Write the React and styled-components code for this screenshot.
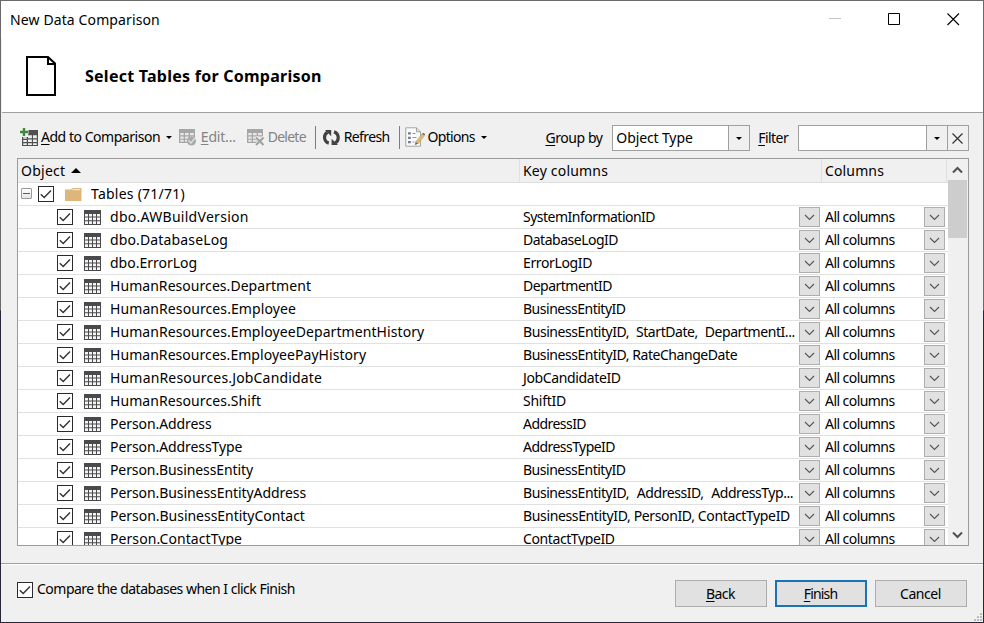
import React from "react";
import styled, { createGlobalStyle } from "styled-components";

const GlobalStyle = createGlobalStyle`
  * { box-sizing: border-box; }
  body { margin: 0; overflow: hidden; background: #fff; }
`;

const Window = styled.div`
  position: relative;
  display: flex;
  flex-direction: column;
  width: 984px;
  height: 623px;
  border: 1px solid;
  border-image: linear-gradient(#6b6a6b 49.7%, #262838 50%) 1;
  background: #f0f0f0;
  color: #000;
  font: 14px/20px "Noto Sans", "Open Sans", sans-serif;
  white-space: nowrap;
`;

const Label = styled.span`
  letter-spacing: ${(p) => p.$ls || 0}px;
  word-spacing: ${(p) => p.$ws || 0}px;
`;

const ObjectName = styled(Label)`
  margin-left: ${(p) => p.$ml ?? 9}px;
`;

const Mnemonic = styled.span`
  text-decoration: underline;
  text-decoration-thickness: 1px;
  text-underline-offset: 2px;
`;

const TitleBar = styled.header`
  display: flex;
  justify-content: space-between;
  height: 37px;
  padding: 9px 23px 0 9px;
  background: #fff;
`;

const WindowControls = styled.div`
  display: flex;
  gap: 46px;
  padding-top: 3px;
`;

const Banner = styled.section`
  display: flex;
  height: 75px;
  padding-left: 24px;
  background: #fff;
  border-bottom: 1px solid #a0a0a0;
  margin: 0 0 0 1px;
`;

const BannerIcon = styled.svg`
  margin-top: 16px;
`;

const Heading = styled.h1`
  margin: 27px 0 0 28px;
  font-size: 16px;
  line-height: 22px;
  font-weight: 700;
  letter-spacing: 0.25px;
`;

const Toolbar = styled.div`
  display: flex;
  align-items: center;
  height: 26px;
  margin: 12px 14px 7px 19px;
`;

const ToolButton = styled.div`
  display: flex;
  align-items: center;
  width: ${(p) => p.$width}px;
  height: 24px;
  margin-bottom: 2px;
  color: ${(p) => (p.$disabled ? "#838383" : "#000")};
  svg { flex: none; margin-right: ${(p) => p.$gap ?? 3}px; }
`;

const Caret = styled.i`
  width: 0;
  height: 0;
  margin-left: ${(p) => p.$ml || 0}px;
  border: 3px solid transparent;
  border-top-color: #000;
  border-bottom: 0;
`;

const Divider = styled.i`
  width: 1px;
  height: 23px;
  margin-bottom: 1px;
  background: #7d7d7d;
  margin-right: ${(p) => p.$mr}px;
`;

const FieldLabel = styled.label`
  width: ${(p) => p.$width}px;
  padding-bottom: 1px;
`;

const Combo = styled.div`
  display: flex;
  width: ${(p) => p.$width}px;
  height: 26px;
  margin-right: ${(p) => p.$mr || 0}px;
  border: 1px solid #a0a0a0;
`;

const ComboValue = styled.div`
  flex: 1;
  padding: 2px 0 0 3px;
  background: #fff;
`;

const ComboButton = styled.div`
  display: flex;
  align-items: center;
  justify-content: center;
  width: ${(p) => p.$width}px;
  border-left: 1px solid #a0a0a0;
`;

const Table = styled.div`
  display: flex;
  width: 952px;
  height: 388px;
  margin-left: 16px;
  border: 1px solid #9b9b9b;
  background: #fff;
  overflow: hidden;
`;

const Grid = styled.div`
  width: 930px;
`;

const HeaderRow = styled.div`
  display: grid;
  grid-template-columns: 502px 302px 125px;
  height: 24px;
  padding-right: 1px;
  background: #f0f0f0;
  border-bottom: 1px solid #dedede;
`;

const HeaderCell = styled.div`
  display: flex;
  align-items: center;
  padding: 1px 0 0 3px;
  border-right: 1px solid #e0e0e0;
`;

const SortArrow = styled.i`
  width: 0;
  height: 0;
  margin: 0 0 1px 6px;
  border: 5px solid transparent;
  border-bottom-color: #000;
  border-top: 0;
`;

const Row = styled.div`
  display: grid;
  grid-template-columns: 502px 302px 126px;
  height: 23px;
  border-bottom: 1px solid #e1e1e1;
`;

const ObjectCell = styled.div`
  display: flex;
  align-items: center;
  padding-left: ${(p) => p.$indent}px;
`;

const DropCell = styled.div`
  display: flex;
  justify-content: space-between;
  padding: 1px ${(p) => p.$right}px 0 3px;
`;

const DropButton = styled.div`
  display: flex;
  align-items: center;
  justify-content: center;
  width: 21px;
  height: 20px;
  border: 1px solid #adadad;
  background: #e1e1e1;
`;

const CheckFrame = styled.span`
  display: flex;
  flex: none;
  width: 16px;
  height: 16px;
  border: 1px solid #2b2b2b;
  background: #fff;
  margin-right: ${(p) => p.$mr}px;
`;

const Expander = styled.span`
  display: flex;
  align-items: center;
  justify-content: center;
  width: 11px;
  height: 11px;
  margin: 0 6px 1px 0;
  border: 1px solid #9a9a9a;
  border-radius: 1px;
  background: linear-gradient(#fff, #e4e4e4);
  &::after { content: ""; width: 7px; height: 1px; background: #4a5d92; }
`;

const ScrollBar = styled.div`
  display: flex;
  flex-direction: column;
  align-items: center;
  width: 20px;
  padding-right: 1px;
  background: #f0f0f0;
`;

const ScrollButton = styled.div`
  display: flex;
  align-items: center;
  justify-content: center;
  height: 21px;
`;

const ScrollThumb = styled.div`
  width: 19px;
  height: 58px;
  margin-bottom: auto;
  background: #cdcdcd;
`;

const Footer = styled.footer`
  display: flex;
  height: 59px;
  margin-top: 17px;
  padding: 15px 16px 0;
  border-top: 1px solid #a0a0a0;
  box-shadow: inset 0 1px #fff;
`;

const FooterOption = styled.label`
  display: flex;
  flex: 1;
  height: 20px;
  ${CheckFrame} { margin-top: 3px; }
`;

const Buttons = styled.div`
  display: flex;
  gap: 8px;
  padding-top: 1px;
`;

const Button = styled.button`
  width: 92px;
  height: 27px;
  padding: 1px 1px 0 0;
  border: ${(p) => (p.$primary ? "2px solid #1a73b5" : "1px solid #adadad")};
  background: #e1e1e1;
  color: #000;
  font: inherit;
`;

const Grip = styled.svg`
  position: absolute;
  right: 0;
  bottom: 0;
`;

function Check({ mr = 0 }) {
  return (
    <CheckFrame $mr={mr}>
      <svg width="14" height="14" fill="none" stroke="#333" strokeWidth="1.4">
        <path d="M1.8 7.2 5.2 10.4 12 3.6" />
      </svg>
    </CheckFrame>
  );
}

function TableIcon() {
  return (
    <svg width="17" height="15">
      <path fill="#4a4a4c" d="M0 0h17v15H0z" />
      <path
        fill="#f4f4f4"
        d="M1 4h3v2.6H1zM5 4h3v2.6H5zM9 4h3v2.6H9zM13 4h3v2.6h-3zM1 7.6h3v2.6H1zM5 7.6h3v2.6H5zM9 7.6h3v2.6H9zM13 7.6h3v2.6h-3zM1 11.2h3v2.7H1zM5 11.2h3v2.7H5zM9 11.2h3v2.7H9zM13 11.2h3v2.7h-3z"
      />
    </svg>
  );
}

function FolderIcon() {
  return (
    <svg width="17" height="15">
      <path fill="#dcb67a" d="M0 2.5h6l2-1.5h8.5v13H0z" />
      <path fill="#f3e4cb" d="M8.2 2h7v1.2H7z" />
    </svg>
  );
}

function AddTableIcon() {
  return (
    <svg width="18" height="18">
      <path fill="#505050" d="M8 2h10v16H2V9h6z" />
      <path
        fill="#eee"
        d="M3.2 9.2h3.6v1.6H3.2zM8 7.2h3.9v3H8zM13 7.2h3.8v3H13zM3.2 12h3.6v2H3.2zM8 11.4h3.9V14H8zM13 11.4h3.8V14H13zM3.2 15.2h3.6v1.7H3.2zM8 15.2h3.9v1.7H8zM13 15.2h3.8v1.7H13z"
      />
      <path stroke="#f0f0f0" strokeWidth="4.5" d="M4 0v8M0 4h8.5" />
      <path stroke="#3c8c3c" strokeWidth="2.4" d="M4 0v8M0 4h8" />
    </svg>
  );
}

function MutedTable() {
  return (
    <>
      <path fill="#a6a6a6" d="M0 1h16v14H0z" />
      <path
        fill="#e8e8e8"
        d="M1.3 5h3.4v2.3H1.3zM6 5h3.7v2.3H6zM11 5h3.8v2.3H11zM1.3 8.5h3.4v2.2H1.3zM6 8.5h3.7v2.2H6zM11 8.5h3.8v2.2H11zM1.3 11.8h3.4v2H1.3zM6 11.8h3.7v2H6z"
      />
    </>
  );
}

function EditIcon() {
  return (
    <svg width="18" height="18">
      <MutedTable />
      <circle cx="12.5" cy="13" r="4.5" fill="#a9a9a9" />
      <path d="M9.5 12.5l2.5 2.5 4-5" stroke="#dedede" strokeWidth="1.5" fill="none" />
    </svg>
  );
}

function DeleteIcon() {
  return (
    <svg width="18" height="18">
      <MutedTable />
      <path stroke="#f0f0f0" strokeWidth="3.6" d="M9 9l8 8M17 9l-8 8" />
      <path stroke="#a0a0a0" strokeWidth="2" d="M9 9.5l7.5 7.5M16.5 9.5L9 17" />
    </svg>
  );
}

function RefreshIcon() {
  return (
    <svg width="17" height="17" fill="none" stroke="#424242" strokeWidth="3.2">
      <path d="M5.8 14.1C.3 12.5.4 5.2 4.6 3.2M11 2.9c5.5 1.7 5.3 9 1.2 11" />
      <path fill="#424242" stroke="none" d="M2 1h6.2v6.2zM15 16H8.6V9.7z" />
    </svg>
  );
}

function OptionsIcon() {
  return (
    <svg width="20" height="20">
      <path fill="#fbfbfb" stroke="#a3a3a3" d="M.8.8h10.7l4 4v14.4H.8z" />
      <path fill="#ddd" stroke="#a3a3a3" d="M11.5.8v4h4" />
      <path fill="#737b9b" d="M3 5.2h2.8v2.2H3zM3 9.7h2.8v2.2H3zM3 14h2.8v2.2H3z" />
      <path stroke="#8f94a8" d="M7.5 6.5h3M7.5 10.5h4M7.5 15h2" />
      <path fill="#dfb96f" stroke="#b5955c" strokeWidth=".5" d="M17 6.8l2.5 1.8-6.3 8.2-2.6-1.9z" />
      <path fill="#666" d="M10.6 14.9l2.6 1.9-3.4 1.3zM17 6.8l2.5 1.8 .5-1.5-1.4-1.2z" />
    </svg>
  );
}

function DropChevron() {
  return (
    <DropButton>
      <svg width="11" height="7" fill="none" stroke="#555" strokeWidth="1.1">
        <path d="M1 1l4.5 4.5L10 1" />
      </svg>
    </DropButton>
  );
}

const BE = "BusinessEntityID";
const rows = [
  ["dbo.AWBuildVersion", 0.28, "SystemInformationID", -0.51],
  ["dbo.DatabaseLog", 0.14, "DatabaseLogID", -0.49],
  ["dbo.ErrorLog", 0, "ErrorLogID", -0.37],
  ["HumanResources.Department", 0.05, "DepartmentID", -0.51],
  ["HumanResources.Employee", 0.09, BE, -0.48],
  ["HumanResources.EmployeeDepartmentHistory", 0.08, `${BE}, StartDate, DepartmentI...`, -0.43, 3.6],
  ["HumanResources.EmployeePayHistory", 0.05, `${BE}, RateChangeDate`, -0.44],
  ["HumanResources.JobCandidate", 0.17, "JobCandidateID", -0.37],
  ["HumanResources.Shift", 0.08, "ShiftID", -0.26],
  ["Person.Address", -0.08, "AddressID", -0.55],
  ["Person.AddressType", -0.08, "AddressTypeID", -0.55],
  ["Person.BusinessEntity", -0.1, BE, -0.48],
  ["Person.BusinessEntityAddress", -0.07, `${BE}, AddressID, AddressTyp...`, -0.43, 4.4],
  ["Person.BusinessEntityContact", -0.03, `${BE}, PersonID, ContactTypeID`, -0.36],
  ["Person.ContactType", 0.07, "ContactTypeID", -0.4],
];

export default function App() {
  return (
    <>
      <GlobalStyle />
      <Window>
        <TitleBar>
          <Label $ls={0.12}>New Data Comparison</Label>
          <WindowControls>
            <svg width="13" height="13"><path stroke="#c4c4c4" d="M0 5.5h12" /></svg>
            <svg width="13" height="13"><path fill="none" stroke="#000" d="M.5.5h11v11H.5z" /></svg>
            <svg width="13" height="13"><path stroke="#000" strokeWidth="1.1" d="M.5.5l11.5 11.5M12 .5L.5 12" /></svg>
          </WindowControls>
        </TitleBar>

        <Banner>
          <BannerIcon width="31" height="42">
            <path fill="none" stroke="#000" strokeWidth="2" d="M1 3h21l7 6.5V41H1z" />
            <path fill="none" stroke="#000" strokeWidth="2" d="M22 3v7h7" />
          </BannerIcon>
          <Heading>Select Tables for Comparison</Heading>
        </Banner>

        <Toolbar>
          <ToolButton $width={159}>
            <AddTableIcon />
            <Label $ls={-0.47}><Mnemonic>A</Mnemonic>dd to Comparison</Label>
            <Caret $ml={6} />
          </ToolButton>
          <ToolButton $width={68} $disabled $gap={4}>
            <EditIcon />
            <Label $ls={-0.2}><Mnemonic>E</Mnemonic>dit...</Label>
          </ToolButton>
          <ToolButton $width={68} $disabled>
            <DeleteIcon />
            <Label $ls={-0.75}>Delete</Label>
          </ToolButton>
          <Divider $mr={7} />
          <ToolButton $width={76} $gap={4}>
            <RefreshIcon />
            <Label $ls={-0.6}>Refresh</Label>
          </ToolButton>
          <Divider $mr={5} />
          <ToolButton $width={141}>
            <OptionsIcon />
            <Label $ls={-0.7}>Options</Label>
            <Caret $ml={6} />
          </ToolButton>
          <FieldLabel $width={67}><Label $ls={-0.44}><Mnemonic>G</Mnemonic>roup by</Label></FieldLabel>
          <Combo $width={138} $mr={8}>
            <ComboValue><Label $ls={-0.12}>Object Type</Label></ComboValue>
            <ComboButton $width={21}><Caret /></ComboButton>
          </Combo>
          <FieldLabel $width={40}><Label $ls={-0.55}><Mnemonic>F</Mnemonic>ilter</Label></FieldLabel>
          <Combo $width={171}>
            <ComboValue />
            <ComboButton $width={21}><Caret /></ComboButton>
            <ComboButton $width={21}>
              <svg width="11" height="11"><path stroke="#333" strokeWidth="1.2" d="M.5.5l10 10M10.5.5l-10 10" /></svg>
            </ComboButton>
          </Combo>
        </Toolbar>

        <Table>
          <Grid>
            <HeaderRow>
              <HeaderCell><Label $ls={0.25}>Object</Label><SortArrow /></HeaderCell>
              <HeaderCell><Label $ls={0.19}>Key columns</Label></HeaderCell>
              <HeaderCell><Label $ls={0.14}>Columns</Label></HeaderCell>
            </HeaderRow>
            <Row>
              <ObjectCell $indent={3}>
                <Expander />
                <Check mr={11} />
                <FolderIcon />
                <ObjectName $ls={0.24} $ml={9}>Tables (71/71)</ObjectName>
              </ObjectCell>
            </Row>
            {rows.map(([name, nameLs, keys, keyLs, keyWs]) => (
              <Row key={name}>
                <ObjectCell $indent={39}>
                  <Check mr={11} />
                  <TableIcon />
                  <ObjectName $ls={nameLs}>{name}</ObjectName>
                </ObjectCell>
                <DropCell $right={2}>
                  <Label $ls={keyLs} $ws={keyWs}>{keys}</Label>
                  <DropChevron />
                </DropCell>
                <DropCell $right={3}>
                  <Label $ls={-0.56}>All columns</Label>
                  <DropChevron />
                </DropCell>
              </Row>
            ))}
          </Grid>
          <ScrollBar>
            <ScrollButton>
              <svg width="11" height="8" fill="none" stroke="#505050" strokeWidth="2"><path d="M1 6.5l4.5-4.5L10 6.5" /></svg>
            </ScrollButton>
            <ScrollThumb />
            <ScrollButton>
              <svg width="11" height="8" fill="none" stroke="#505050" strokeWidth="2"><path d="M1 1.5L5.5 6 10 1.5" /></svg>
            </ScrollButton>
          </ScrollBar>
        </Table>

        <Footer>
          <FooterOption>
            <Check mr={4} />
            <Label $ls={-0.5}>Compare the databases when I click Finish</Label>
          </FooterOption>
          <Buttons>
            <Button><Label $ls={-0.5}><Mnemonic>B</Mnemonic>ack</Label></Button>
            <Button $primary><Label $ls={-0.85}><Mnemonic>F</Mnemonic>inish</Label></Button>
            <Button><Label $ls={-0.43}>Cancel</Label></Button>
          </Buttons>
        </Footer>
        <Grip width="10" height="10" fill="#bdbdbd">
          <path d="M7 1h2v2H7zM4 4h2v2H4zM7 4h2v2H7zM1 7h2v2H1zM4 7h2v2H4zM7 7h2v2H7z" />
        </Grip>
      </Window>
    </>
  );
}
